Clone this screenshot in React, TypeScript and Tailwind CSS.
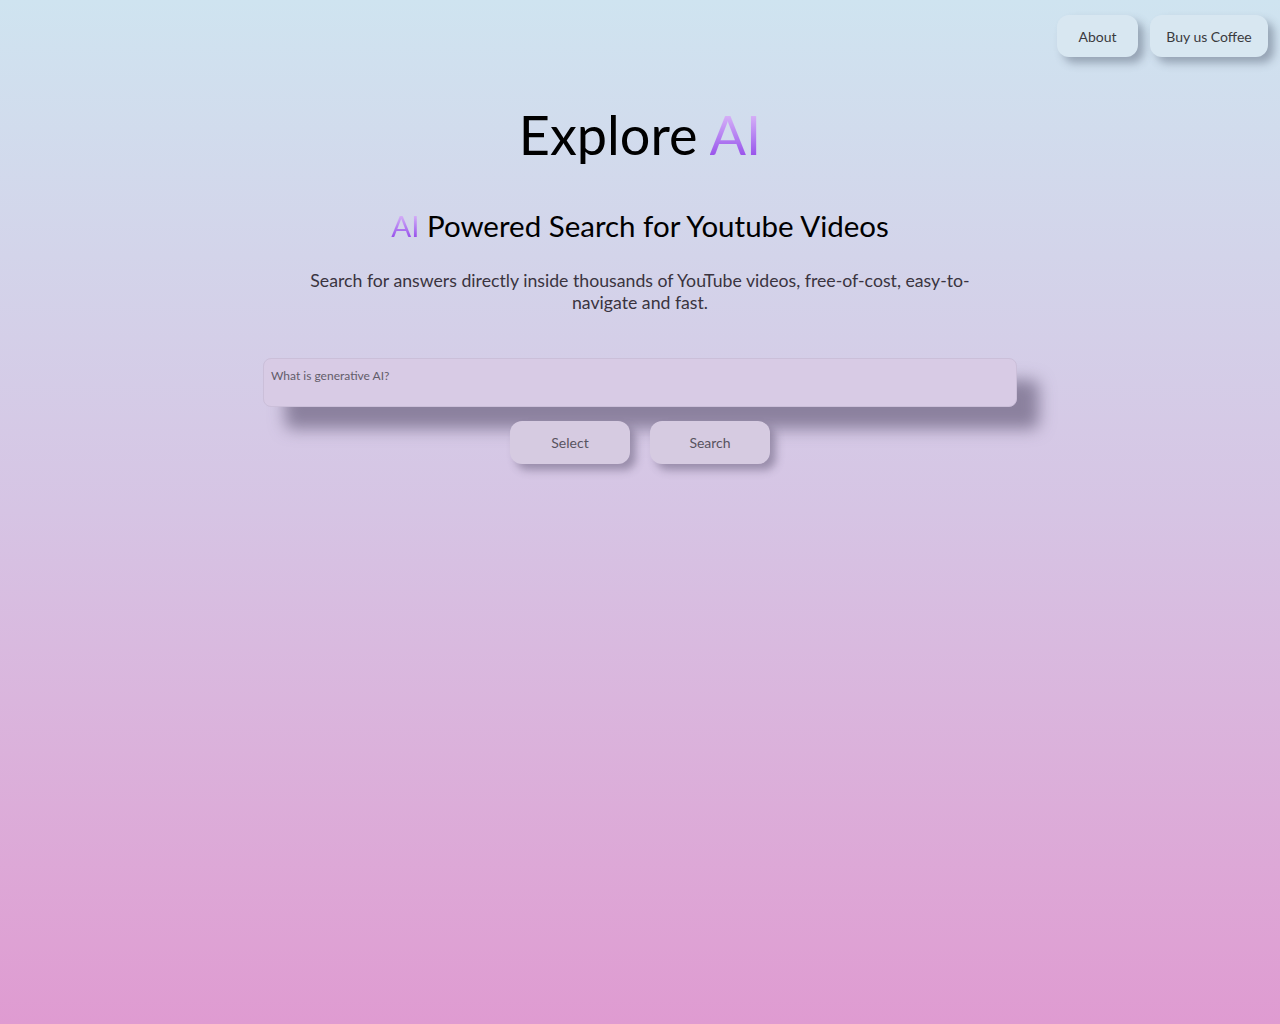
import React from "react";

export default function App() {
  return (
    <div
      className="min-h-[1024px] w-full bg-gradient-to-b from-[#cfe4f0] via-[#d6c4e4] to-[#df9bd1] relative"
      style={{ fontFamily: "Lato, 'Open Sans', sans-serif" }}
    >
      <div className="flex justify-end gap-3 pt-[15px] pr-[12px]">
        <button className="h-[42px] w-[81px] rounded-[12px] bg-[#d8e7f1] text-[14px] text-[#3a3a3e] shadow-[6px_6px_8px_rgba(80,90,110,0.45)]">
          About
        </button>
        <button className="h-[42px] w-[118px] rounded-[12px] bg-[#d8e7f1] text-[14px] text-[#3a3a3e] shadow-[6px_6px_8px_rgba(80,90,110,0.45)]">
          Buy us Coffee
        </button>
      </div>

      <div className="flex flex-col items-center">
        <h1 className="mt-[46px] text-[54px] leading-[64px] text-black">
          Explore{" "}
          <span className="bg-gradient-to-b from-[#ecccf8] to-[#8a2be6] bg-clip-text text-transparent">
            AI
          </span>
        </h1>
        <h2 className="mt-[39px] text-[29.5px] leading-[40px] text-black">
          <span className="bg-gradient-to-b from-[#ecccf8] to-[#8a2be6] bg-clip-text text-transparent">
            AI
          </span>{" "}
          Powered Search for Youtube Videos
        </h2>
        <p className="mt-[24px] w-[672px] text-center text-[17.7px] leading-[22px] text-[#3a3440]">
          Search for answers directly inside thousands of YouTube videos, free-of-cost, easy-to-navigate and fast.
        </p>

        <textarea
          placeholder="What is generative AI?"
          className="mt-[44px] h-[49px] w-[754px] resize-none rounded-[8px] border border-[#cbbfd9] bg-[#d8cbe5] px-[7px] py-[8px] text-[12px] text-[#555] placeholder:text-[#635d6a] shadow-[22px_22px_16px_rgba(90,80,110,0.6)] outline-none"
        />

        <div className="mt-[14px] flex gap-[20px]">
          <button className="h-[43px] w-[120px] rounded-[12px] bg-[#d6cbe1] text-[14px] text-[#58535f] shadow-[6px_6px_8px_rgba(80,70,100,0.45)]">
            Select
          </button>
          <button className="h-[43px] w-[120px] rounded-[12px] bg-[#d6cbe1] text-[14px] text-[#58535f] shadow-[6px_6px_8px_rgba(80,70,100,0.45)]">
            Search
          </button>
        </div>
      </div>
    </div>
  );
}
